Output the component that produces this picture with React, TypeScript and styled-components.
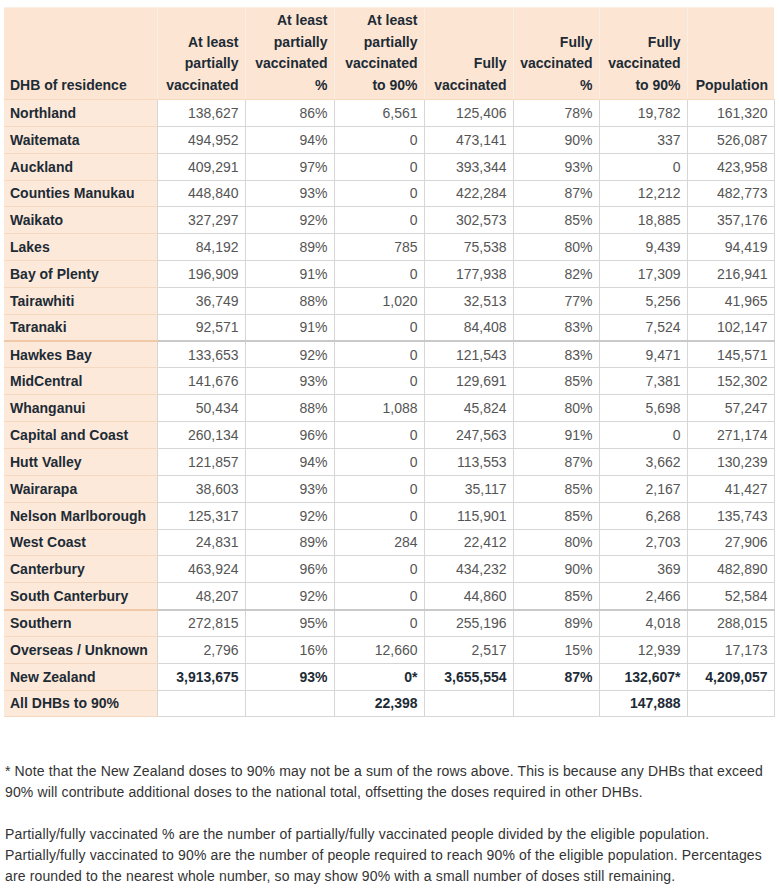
import React from "react";
import styled, { createGlobalStyle } from "styled-components";

const Global = createGlobalStyle`
  html, body { margin: 0; padding: 0; background: #ffffff; }
  body { font-family: "Liberation Sans", Arial, sans-serif; }
`;

const Page = styled.div`
  padding: 7px 4px 0 4px;
  width: 771px;
`;

const Table = styled.table`
  border-collapse: collapse;
  table-layout: fixed;
  width: 770px;
  font-size: 14px;
`;

const HeadCell = styled.th<{ $first?: boolean }>`
  background: #fce6d3;
  color: #1d2b36;
  font-weight: bold;
  text-align: ${(p) => (p.$first ? "left" : "right")};
  vertical-align: bottom;
  line-height: 21.5px;
  padding: 2px 6px 3px 6px;
  height: 85px;
  border-left: 1px solid #fbefe4;
  border-bottom: 1px solid #f6d9bf;
  border-top: 1px solid #fbefe4;
  &:first-child { border-left: none; }
`;

const Row = styled.tr<{ $sep?: boolean }>`
  height: 26.85px;
  & > td {
    border-bottom: ${(p) => (p.$sep ? "2px solid #c9c9c9" : "1px solid #d6d6d6")};
  }
  & > td:first-child {
    border-bottom: ${(p) => (p.$sep ? "2px solid #f0c9a6" : "1px solid #f4d8bf")};
  }
`;

const NameCell = styled.td`
  background: #fce9d9;
  color: #1d2b36;
  font-weight: bold;
  text-align: left;
  padding: 0 6px;
  line-height: 20px;
  white-space: nowrap;
  border-right: 1px solid #d6d6d6;
`;

const NumCell = styled.td<{ $bold?: boolean }>`
  color: ${(p) => (p.$bold ? "#1d2b36" : "#555555")};
  font-weight: ${(p) => (p.$bold ? "bold" : "normal")};
  text-align: right;
  padding: 0 6px;
  line-height: 20px;
  white-space: nowrap;
  border-left: 1px solid #d6d6d6;
  border-right: 1px solid #d6d6d6;
`;

const Notes = styled.div`
  margin-top: 44px;
  width: 768px;
  color: #333333;
  font-size: 14px;
  line-height: 21px;
  letter-spacing: 0.14px;
  padding-left: 1px;
`;

const Para = styled.p`
  margin: 0 0 21px 0;
`;

const widths = [153, 88, 89, 90, 89, 86, 88, 87];

const headers: string[][] = [
  ["DHB of residence"],
  ["At least", "partially", "vaccinated"],
  ["At least", "partially", "vaccinated", "%"],
  ["At least", "partially", "vaccinated", "to 90%"],
  ["Fully", "vaccinated"],
  ["Fully", "vaccinated", "%"],
  ["Fully", "vaccinated", "to 90%"],
  ["Population"],
];

type R = { name: string; v: string[]; bold?: boolean; sep?: boolean };

const rows: R[] = [
  { name: "Northland", v: ["138,627", "86%", "6,561", "125,406", "78%", "19,782", "161,320"] },
  { name: "Waitemata", v: ["494,952", "94%", "0", "473,141", "90%", "337", "526,087"] },
  { name: "Auckland", v: ["409,291", "97%", "0", "393,344", "93%", "0", "423,958"] },
  { name: "Counties Manukau", v: ["448,840", "93%", "0", "422,284", "87%", "12,212", "482,773"] },
  { name: "Waikato", v: ["327,297", "92%", "0", "302,573", "85%", "18,885", "357,176"] },
  { name: "Lakes", v: ["84,192", "89%", "785", "75,538", "80%", "9,439", "94,419"] },
  { name: "Bay of Plenty", v: ["196,909", "91%", "0", "177,938", "82%", "17,309", "216,941"] },
  { name: "Tairawhiti", v: ["36,749", "88%", "1,020", "32,513", "77%", "5,256", "41,965"] },
  { name: "Taranaki", v: ["92,571", "91%", "0", "84,408", "83%", "7,524", "102,147"], sep: true },
  { name: "Hawkes Bay", v: ["133,653", "92%", "0", "121,543", "83%", "9,471", "145,571"] },
  { name: "MidCentral", v: ["141,676", "93%", "0", "129,691", "85%", "7,381", "152,302"] },
  { name: "Whanganui", v: ["50,434", "88%", "1,088", "45,824", "80%", "5,698", "57,247"] },
  { name: "Capital and Coast", v: ["260,134", "96%", "0", "247,563", "91%", "0", "271,174"] },
  { name: "Hutt Valley", v: ["121,857", "94%", "0", "113,553", "87%", "3,662", "130,239"] },
  { name: "Wairarapa", v: ["38,603", "93%", "0", "35,117", "85%", "2,167", "41,427"] },
  { name: "Nelson Marlborough", v: ["125,317", "92%", "0", "115,901", "85%", "6,268", "135,743"] },
  { name: "West Coast", v: ["24,831", "89%", "284", "22,412", "80%", "2,703", "27,906"] },
  { name: "Canterbury", v: ["463,924", "96%", "0", "434,232", "90%", "369", "482,890"] },
  { name: "South Canterbury", v: ["48,207", "92%", "0", "44,860", "85%", "2,466", "52,584"], sep: true },
  { name: "Southern", v: ["272,815", "95%", "0", "255,196", "89%", "4,018", "288,015"] },
  { name: "Overseas / Unknown", v: ["2,796", "16%", "12,660", "2,517", "15%", "12,939", "17,173"] },
  { name: "New Zealand", v: ["3,913,675", "93%", "0*", "3,655,554", "87%", "132,607*", "4,209,057"], bold: true },
  { name: "All DHBs to 90%", v: ["", "", "22,398", "", "", "147,888", ""], bold: true },
];

export default function App() {
  return (
    <Page>
      <Global />
      <Table>
        <colgroup>
          {widths.map((w, i) => (
            <col key={i} style={{ width: w }} />
          ))}
        </colgroup>
        <thead>
          <tr>
            {headers.map((lines, i) => (
              <HeadCell key={i} $first={i === 0}>
                {lines.map((l, j) => (
                  <React.Fragment key={j}>
                    {j > 0 && <br />}
                    {l}
                  </React.Fragment>
                ))}
              </HeadCell>
            ))}
          </tr>
        </thead>
        <tbody>
          {rows.map((r) => (
            <Row key={r.name} $sep={r.sep}>
              <NameCell>{r.name}</NameCell>
              {r.v.map((v, i) => (
                <NumCell key={i} $bold={r.bold}>
                  {v}
                </NumCell>
              ))}
            </Row>
          ))}
        </tbody>
      </Table>
      <Notes>
        <Para>
          * Note that the New Zealand doses to 90% may not be a sum of the rows above. This is because any DHBs that exceed
          90% will contribute additional doses to the national total, offsetting the doses required in other DHBs.
        </Para>
        <Para>
          Partially/fully vaccinated % are the number of partially/fully vaccinated people divided by the eligible population.
          Partially/fully vaccinated to 90% are the number of people required to reach 90% of the eligible population. Percentages
          are rounded to the nearest whole number, so may show 90% with a small number of doses still remaining.
        </Para>
      </Notes>
    </Page>
  );
}
